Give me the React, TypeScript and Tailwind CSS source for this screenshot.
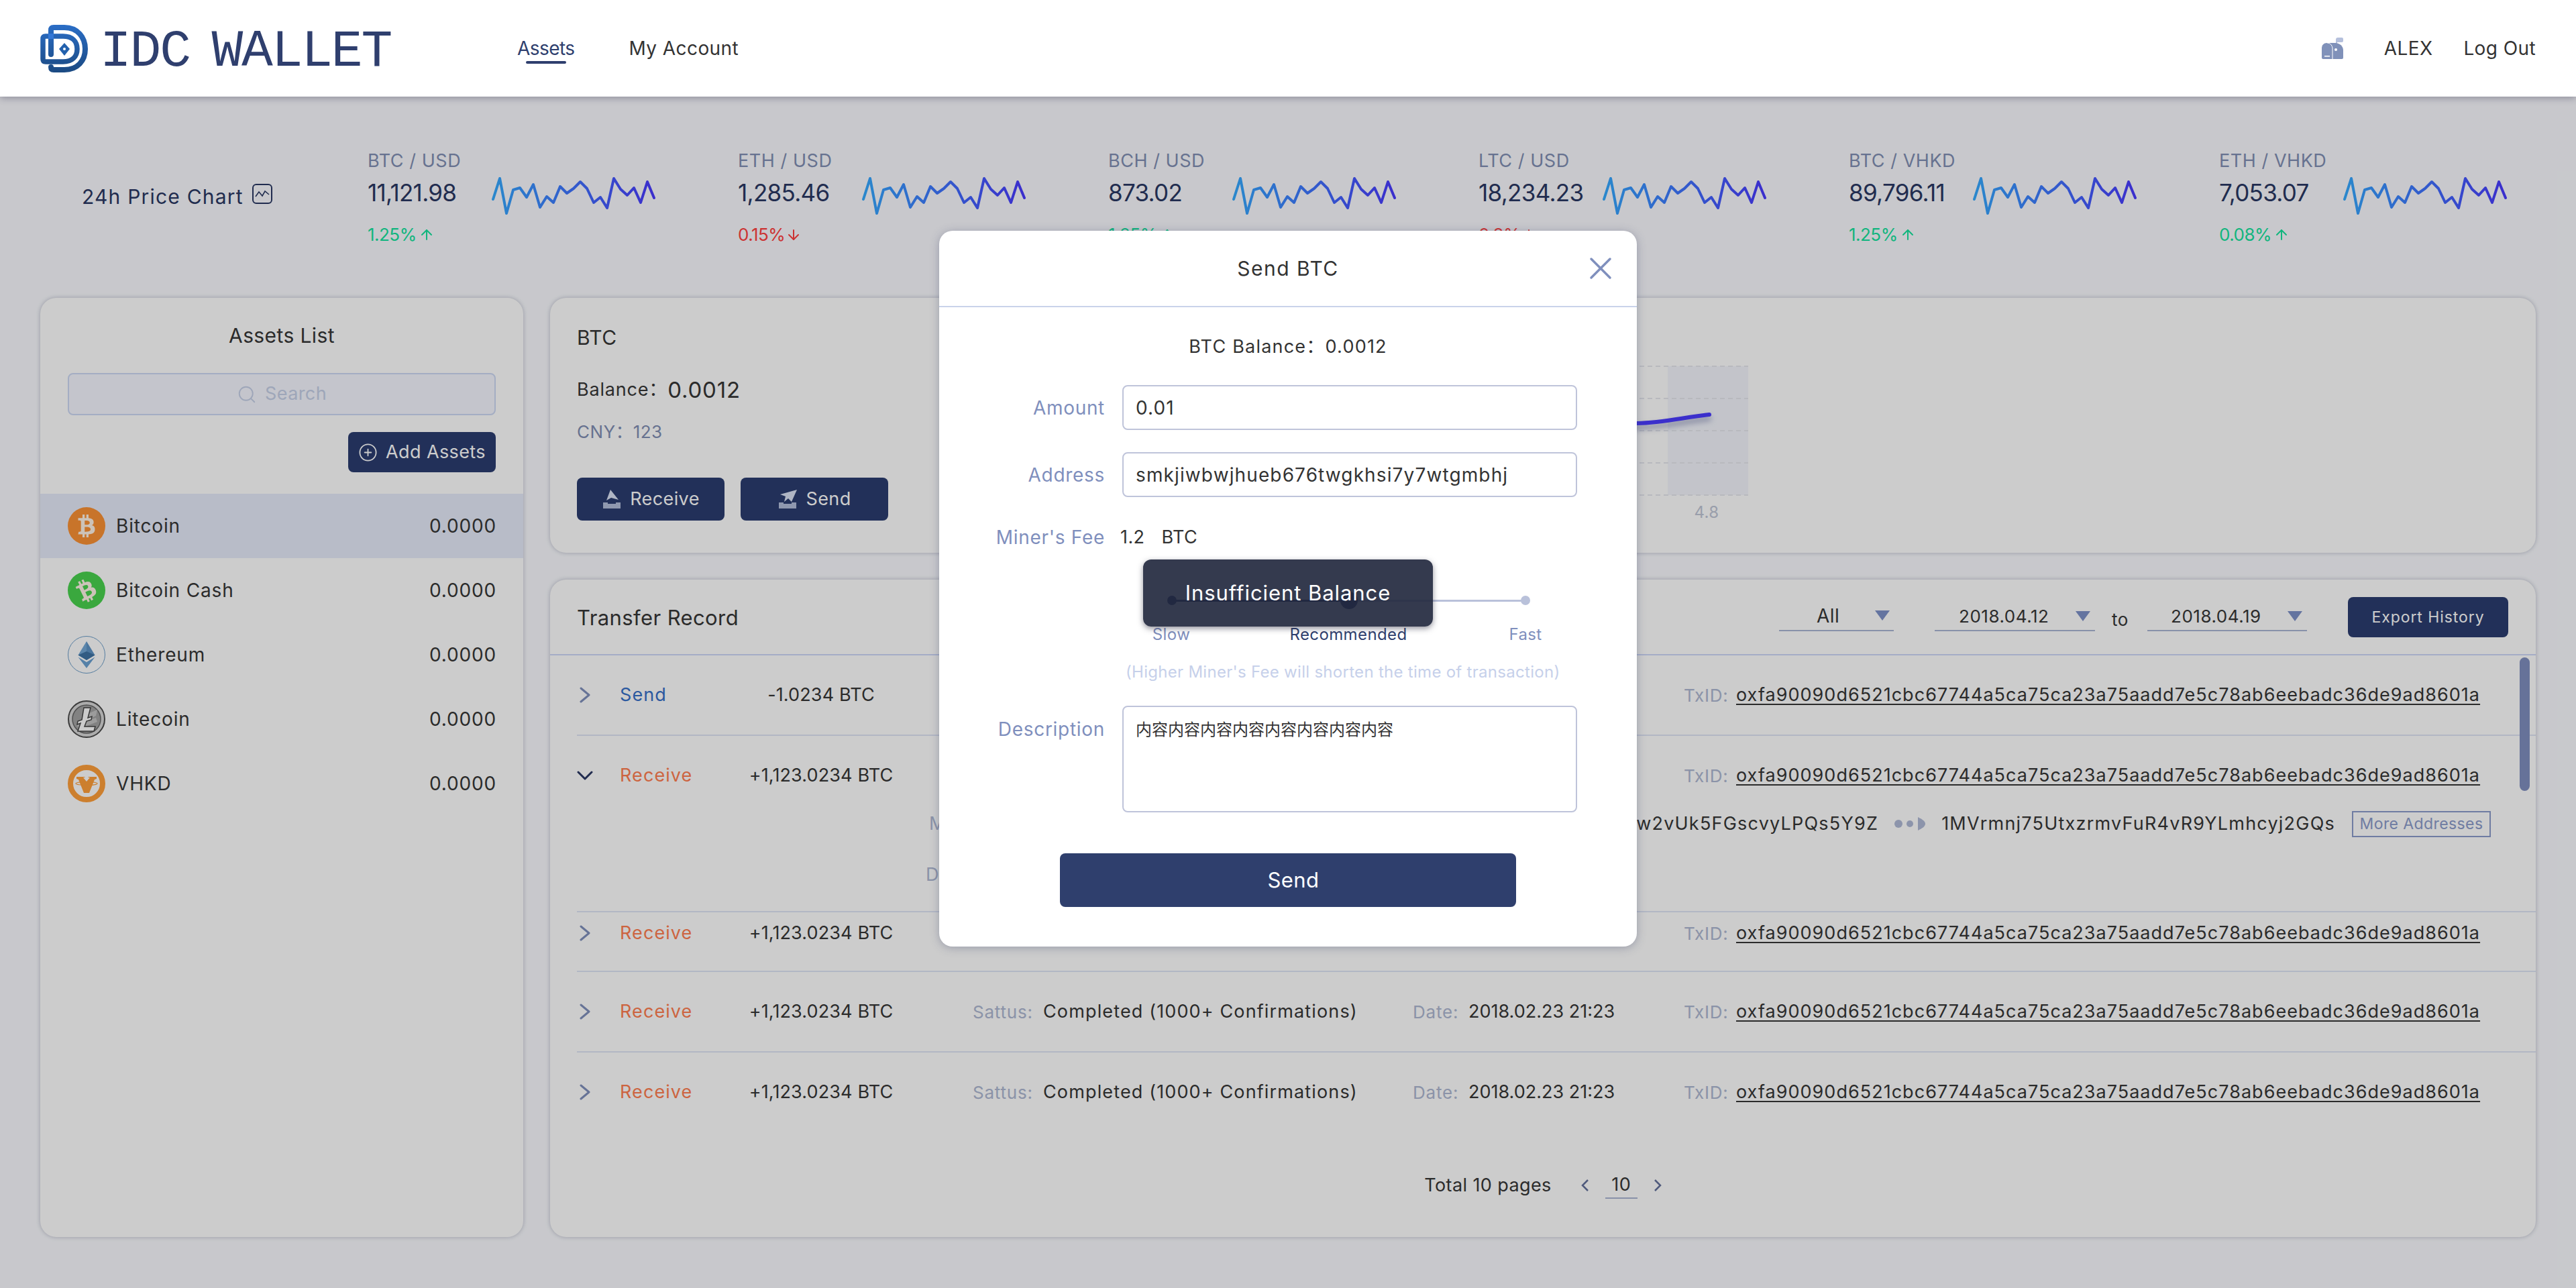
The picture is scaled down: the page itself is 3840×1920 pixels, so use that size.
import { ArrowDown, ArrowUp, CirclePlus, Search, X } from 'lucide-react';
import { FaBtc } from 'react-icons/fa';

/* ------------------------------------------Data------------------*/
const TICKERS = [
  { pair: 'BTC / USD', price: '11,121.98', pct: '1.25%', up: true },
  { pair: 'ETH / USD', price: '1,285.46', pct: '0.15%', up: false },
  { pair: 'BCH / USD', price: '873.02', pct: '1.25%', up: true },
  { pair: 'LTC / USD', price: '18,234.23', pct: '0.8%', up: false },
  { pair: 'BTC / VHKD', price: '89,796.11', pct: '1.25%', up: true },
  { pair: 'ETH / VHKD', price: '7,053.07', pct: '0.08%', up: true },
];

const SPARK_POINTS =
  '0,31 10,0 20,52 30,17 40,14 50,28 60,9 70,43 80,27 90,36 100,12 110,22 120,15 130,5 140,15 150,36 160,28 170,44 180,0 190,16 200,25 210,14 220,36 230,5 240,29';

const HASH = 'oxfa90090d6521cbc67744a5ca75ca23a75aadd7e5c78ab6eebadc36de9ad8601a';

/* ------------------------------------------Icons-----------------*/
function Logo() {
  return (
    <svg viewBox="60 36 71 71" className="w-[71px] h-[71px]" fill="none">
      <defs>
        <linearGradient id="logoFill" x1="0" y1="36" x2="0" y2="107" gradientUnits="userSpaceOnUse">
          <stop offset="0" stopColor="#2a6dc6" />
          <stop offset="1" stopColor="#1b4a82" />
        </linearGradient>
      </defs>
      <path d="M76 80V44q0-4 4-4h16c20 0 31 15 31 32s-11 31-31 31H80q-4 0-4-4" stroke="url(#logoFill)" strokeWidth="8" strokeLinecap="round" />
      <path d="M94 53H68q-4 0-4 4v30q0 4 4 4h26c14 0 21-8 21-19s-7-19-21-19z" stroke="url(#logoFill)" strokeWidth="7.5" />
      <rect x="72" y="49" width="8" height="8" fill="#3377d6" />
      <path d="M96 63l8 9-8 10-8-10z" fill="#2361ad" />
      <circle cx="96" cy="72" r="2" fill="#fff" />
    </svg>
  );
}

function Mailbox() {
  return (
    <svg viewBox="0 0 32 32" className="w-8 h-8">
      <path d="M21 17V3q0-3 3-3h6q2 0 2 2v3q0 2-2 2h-7v10z" fill="#b5c0dc" />
      <path d="M8 8h12c7 0 12 5 12 11v11q0 2-2 2H2q-2 0-2-2V16c0-5 3-8 8-8z" fill="#8091b9" />
      <path d="M8 8c5 0 8 4 8 9v15" stroke="#fff" strokeWidth="1" fill="none" />
      <circle cx="21" cy="18" r="2" fill="#fff" />
      <rect x="4" y="27" width="8" height="1.5" fill="#fff" />
    </svg>
  );
}

function ChartIcon() {
  return (
    <svg viewBox="0 0 30 30" className="w-[30px] h-[30px]" fill="none" stroke="#2a3863" strokeWidth="2">
      <rect x="1" y="1" width="28" height="28" rx="5" />
      <path d="M5 19l5-7 5 6 4-7 6 5" strokeWidth="1.6" />
    </svg>
  );
}

function TrayPlane({ receive }: { receive?: boolean }) {
  return (
    <svg viewBox="0 0 30 28" className="w-[30px] h-[28px]">
      {receive ? (
        <path d="M13 0l12 15-11-3-7 4z" fill="#dbe3f5" />
      ) : (
        <path d="M29 0L21 18l-5-5-6 5 2-8-8-3z" fill="#dbe3f5" />
      )}
      <path d="M2 19h7v2h12v-2h7v9H2z" fill="#b3bedb" />
    </svg>
  );
}

function Sparkline({ id }: { id: string }) {
  return (
    <svg width="246" height="60" viewBox="-3 -3 246 60" fill="none" className="shrink-0">
      <defs>
        <linearGradient id={id} x1="0" y1="0" x2="240" y2="0" gradientUnits="userSpaceOnUse">
          <stop offset="0" stopColor="#35aaff" />
          <stop offset="1" stopColor="#4a3aff" />
        </linearGradient>
      </defs>
      <polyline points={SPARK_POINTS} stroke={`url(#${id})`} strokeWidth="4" strokeLinejoin="round" strokeLinecap="round" />
    </svg>
  );
}

function CoinBadge({ color, tilt }: { color: string; tilt: string }) {
  return (
    <div className={`w-14 h-14 rounded-full flex items-center justify-center text-[#fff4e8] ${color}`}>
      <FaBtc className={`w-[30px] h-[34px] ${tilt}`} />
    </div>
  );
}

function EthIcon() {
  return (
    <svg viewBox="0 0 56 56" className="w-14 h-14">
      <circle cx="28" cy="28" r="27.5" fill="none" stroke="#6a9cc8" strokeWidth="1" />
      <path d="M28 8L15.5 28.5 28 36z" fill="#73a8d6" />
      <path d="M28 8l12.500 20.500L28 36z" fill="#5e94c6" />
      <path d="M15.500 28.500L28 23l12.500 5.500L28 36z" fill="#3f74a4" />
      <path d="M15.500 31.500L28 39l12.500-7.500L28 48z" fill="#6ba2d2" />
    </svg>
  );
}

function LtcIcon() {
  return (
    <svg viewBox="0 0 56 56" className="w-14 h-14">
      <circle cx="28" cy="28" r="27" fill="#d8d8d8" stroke="#4c4c4c" strokeWidth="2" />
      <circle cx="28" cy="28" r="21" fill="#a3a3a3" stroke="#666" strokeWidth="1.500" />
      <path d="M30 20l14-6-2 9-12 6zM12 36l30-10 2 6-26 10z" fill="#c4c4c4" />
      <path d="M24 11h10l-4 15 6-2-1 5-7 2-3 8h16l-2 7H15l4-12-5 2 1-5 6-2z" fill="#fff" stroke="#444" strokeWidth="1.500" />
    </svg>
  );
}

function VhkdIcon() {
  return (
    <svg viewBox="0 0 56 56" className="w-14 h-14">
      <circle cx="28" cy="28" r="24" fill="#fff" stroke="#ff9f3a" strokeWidth="8" />
      <path d="M13 18h12l3 4 3-4h12v3l-3 1-8 20h-8l-8-20-3-1z" fill="#ff9f3a" />
      <path d="M23 19h10l-5 6z" fill="#fff" />
      <ellipse cx="28" cy="28" rx="16" ry="2.500" fill="none" stroke="#ff9f3a" strokeWidth="1.200" />
    </svg>
  );
}

function Caret() {
  return (
    <svg viewBox="0 0 22 15" className="w-[22px] h-[15px]">
      <path d="M0 0h22L11 15z" fill="#7e91c8" />
    </svg>
  );
}

const COINS = [
  { name: 'Bitcoin', icon: <CoinBadge color="bg-[#fa9135]" tilt="rotate-[0deg]" /> },
  { name: 'Bitcoin Cash', icon: <CoinBadge color="bg-[#49d24e]" tilt="-rotate-[26deg]" /> },
  { name: 'Ethereum', icon: <EthIcon /> },
  { name: 'Litecoin', icon: <LtcIcon /> },
  { name: 'VHKD', icon: <VhkdIcon /> },
];

/* ------------------------------------------Parts-----------------*/
function Header() {
  return (
    <header className="relative z-30 h-36 bg-white shadow-[0_2px_10px_rgba(50,50,80,0.4)] flex items-center pl-[60px] pr-[60px]">
      <Logo />
      <div className="ml-[18px] mt-[9px] w-[436px] font-['Liberation_Mono',monospace] text-[78px] leading-none tracking-[-2.200px] [word-spacing:-12px] text-[#2f3f6e] whitespace-nowrap">
        IDC WALLET
      </div>
      <nav className="ml-[186px] flex gap-[81px] text-[28px]">
        <div className="relative -tracking-[0.02em] text-[#2f3f6e]">
          Assets
          <span className="absolute left-[13px] top-[40px] w-[60px] h-1 rounded-full bg-[#2f3f6e]" />
        </div>
        <div className="tracking-[0.015em] text-[#333]">My Account</div>
      </nav>
      <div className="ml-auto flex items-center text-[28px] text-[#333]">
        <Mailbox />
        <span className="ml-[61px]">ALEX</span>
        <span className="ml-[46px]">Log Out</span>
      </div>
    </header>
  );
}

function Ticker({ pair, price, pct, up, index }: (typeof TICKERS)[number] & { index: number }) {
  return (
    <div className="w-[552px] shrink-0 pt-[75px]">
      <div className="text-[27px] leading-[42px] tracking-[0.02em] text-[#818fb4]">{pair}</div>
      <div className="flex items-start h-[64px]">
        <div className="w-[187px] text-[35px] leading-[52px] -tracking-[0.02em] text-[#2a3863]">{price}</div>
        <div className="mt-[2px] -ml-[3px]">
          <Sparkline id={`spark${index}`} />
        </div>
      </div>
      <div className={`mt-[7px] flex items-center text-[26px] leading-9 -tracking-[0.02em] ${up ? 'text-[#16e39e]' : 'text-[#ff4040]'}`}>
        {pct}
        {up ? <ArrowUp className="w-6 h-6 ml-[3px]" /> : <ArrowDown className="w-6 h-6 ml-[1px]" />}
      </div>
    </div>
  );
}

function AssetsList() {
  return (
    <aside className="w-[720px] shrink-0 bg-white rounded-3xl shadow-[0_0_6px_rgba(115,120,145,0.45)] overflow-hidden">
      <h2 className="h-[112px] flex items-center justify-center text-[30px] font-normal text-[#363636]">Assets List</h2>
      <div className="mx-[41px] h-[63px] rounded-lg border-2 border-[#cdd9f4] bg-[#f5f7ff] flex items-center justify-center text-[27px] text-[#c6d0e8]">
        <Search className="w-[30px] h-[30px] mr-[12px]" strokeWidth={1.500} />
        Search
      </div>
      <div className="mt-[25px] mr-[41px] flex justify-end">
        <button className="w-[220px] h-[60px] rounded-lg bg-[#2b3d70] text-[#fff] text-[27px] flex items-center justify-center gap-[12px]">
          <CirclePlus className="w-[29px] h-[29px]" strokeWidth={1.500} />
          Add Assets
        </button>
      </div>
      <ul className="mt-[32px]">
        {COINS.map((coin, i) => (
          <li key={coin.name} className={`h-24 pl-[41px] pr-[40px] flex items-center text-[28px] tracking-[0.03em] text-[#363636] ${i === 0 ? 'bg-[#e6ebfa]' : ''}`}>
            {coin.icon}
            <span className="ml-4">{coin.name}</span>
            <span className="ml-auto">0.0000</span>
          </li>
        ))}
      </ul>
    </aside>
  );
}

function BalanceCard() {
  return (
    <section className="h-[380px] bg-white rounded-3xl shadow-[0_0_6px_rgba(115,120,145,0.45)] flex pl-10">
      <div className="w-[540px] shrink-0 pt-[39px]">
        <div className="text-[30px] leading-10 text-[#363636]">BTC</div>
        <div className="mt-[38px] leading-10 text-[#363636] text-[27px] flex items-center tracking-[0.03em]">
          Balance：<span className="text-[33px]">0.0012</span>
        </div>
        <div className="mt-[23px] leading-10 text-[26px] text-[#818fb4]">CNY：123</div>
        <div className="mt-[48px] flex gap-6">
          <button className="w-[220px] h-16 rounded-lg bg-[#2b3d70] text-[#fff] text-[27px] flex items-center justify-center gap-[12px]">
            <TrayPlane receive />
            Receive
          </button>
          <button className="w-[220px] h-16 rounded-lg bg-[#2b3d70] text-[#fff] text-[27px] flex items-center justify-center gap-[12px]">
            <TrayPlane />
            Send
          </button>
        </div>
      </div>
      <svg width="1230" height="260" viewBox="1400 530 1230 260" className="mt-[86px] shrink-0">
        <rect x="2486" y="546" width="120" height="192" fill="#f4f6fd" />
        {[546, 594, 642, 690, 738].map((y) => (
          <line key={y} x1="1400" x2="2606" y1={y} y2={y} stroke="#e6e8ee" strokeWidth="2" strokeDasharray="7 5" />
        ))}
        <path d="M1400 700C1800 680 2300 640 2440 631c40-1 70-9 108-13" fill="none" stroke="#4a3bff" strokeWidth="6" strokeLinecap="round" className="drop-shadow-[0_6px_4px_rgba(70,80,140,0.5)]" />
        <text x="2544" y="772" textAnchor="middle" fontSize="24" fill="#c0c6d6">4.8</text>
      </svg>
    </section>
  );
}

function Cols({ amount, kind, open }: { amount: string; kind: 'Send' | 'Receive'; open?: boolean }) {
  const dim = 'text-[26px] tracking-[0.03em] text-[#aeb8d2]';
  return (
    <div className="h-[118px] shrink-0 flex items-center text-[27px] tracking-normal text-[#363636] whitespace-nowrap">
      <div className="w-16 shrink-0">
        {open ? (
          <svg viewBox="0 0 24 14" className="w-6 h-3.5" fill="none" stroke="#2a3863" strokeWidth="3" strokeLinecap="round" strokeLinejoin="round">
            <path d="M2 2l10 10L22 2" />
          </svg>
        ) : (
          <svg viewBox="0 0 16 24" className="w-4 h-6 ml-1" fill="none" stroke="#8090bc" strokeWidth="3" strokeLinecap="round" strokeLinejoin="round">
            <path d="M2 2l12 10L2 22" />
          </svg>
        )}
      </div>
      <div className={`w-[150px] shrink-0 tracking-[0.04em] ${kind === 'Send' ? 'text-[#3670c8]' : 'text-[#ff7e50]'}`}>{kind}</div>
      <div className="w-[300px] shrink-0 text-center tracking-[0.005em]">{amount}</div>
      <div className="w-[76px] shrink-0" />
      <div className="w-[656px] shrink-0 flex items-center">
        <span className={`w-[105px] ${dim}`}>Sattus:</span>
        <span className="tracking-[0.042em]">Completed (1000+ Confirmations)</span>
      </div>
      <div className="w-[404px] shrink-0 flex items-center">
        <span className={`w-[83px] ${dim}`}>Date:</span>2018.02.23 21:23
      </div>
      <div className="flex items-center">
        <span className={`w-[78px] ${dim}`}>TxID:</span>
        <span className="underline underline-offset-4 tracking-[0.038em]">{HASH}</span>
      </div>
    </div>
  );
}

function TransferCard() {
  return (
    <section className="mt-10 h-[980px] bg-white rounded-3xl shadow-[0_0_6px_rgba(115,120,145,0.45)] overflow-hidden">
      <div className="h-[113px] pl-10 pr-[41px] border-b-2 border-[#cdd8f8] flex items-start">
        <h2 className="mt-[37px] text-[31px] leading-10 font-normal text-[#363636]">Transfer Record</h2>
        <div className="ml-auto flex items-start text-[26px] text-[#363636]">
          <div className="w-[171px] h-[77px] border-b-2 border-[#aab6d4] flex items-center pt-[32px] pl-[56px]">
            <span className="text-[28px]">All</span>
            <span className="ml-auto mr-[6px]"><Caret /></span>
          </div>
          <div className="ml-[61px] w-[239px] h-[77px] border-b-2 border-[#aab6d4] flex items-center pt-[34px] pl-[36px]">
            <span className="tracking-[0.02em]">2018.04.12</span>
            <span className="ml-auto mr-[7px]"><Caret /></span>
          </div>
          <div className="w-[78px] h-[77px] pt-[40px] pl-[25px] leading-10">to</div>
          <div className="w-[238px] h-[77px] border-b-2 border-[#aab6d4] flex items-center pt-[34px] pl-[35px]">
            <span className="tracking-[0.02em]">2018.04.19</span>
            <span className="ml-auto mr-[7px]"><Caret /></span>
          </div>
          <button className="ml-[61px] mt-[26px] w-[239px] h-[60px] rounded-lg bg-[#2b3d70] text-[#fff] text-[23px] tracking-[0.04em]">Export History</button>
        </div>
      </div>

      <div className="relative h-[708px] overflow-hidden pl-10 text-[27px]">
        <div className="absolute right-[9px] top-[3px] w-[15px] h-[199px] rounded-full bg-[#808fc0]" />
        <div className="border-b-2 border-[#dfe5f5]">
          <Cols kind="Send" amount="-1.0234 BTC" />
        </div>
        <div className="h-[263px] border-b-2 border-[#dfe5f5]">
          <Cols kind="Receive" amount="+1,123.0234 BTC" open />
          <div className="flex items-center justify-between pl-[525px] pr-[67px] -mt-[7px] h-10 text-[#363636] whitespace-nowrap">
            <span className="text-[#aeb8d2]">Miner's Fee</span>
            <div className="flex items-center">
              <span className="tracking-[0.045em]">1DFhGpVw2vUk5FGscvyLPQs5Y9Z</span>
              <svg viewBox="0 0 46 20" className="w-[46px] h-5 mx-[24px]" fill="#b0bad6">
                <circle cx="6" cy="10" r="6" />
                <circle cx="23" cy="10" r="5" />
                <path d="M35 0c6 3 11 6 11 10s-5 7-11 10z" />
              </svg>
              <span className="tracking-[0.045em]">1MVrmnj75UtxzrmvFuR4vR9YLmhcyj2GQs</span>
              <span className="ml-[25px] h-[39px] w-[207px] border-2 border-[#8b9ccb] text-[#8b9ccb] text-[23px] flex items-center justify-center">More Addresses</span>
            </div>
          </div>
          <div className="mt-[36px] pl-[520px] h-10 leading-10 text-[#aeb8d2]">Description</div>
        </div>
        <div className="h-[89px] border-b-2 border-[#dfe5f5] overflow-hidden">
          <div className="-mt-[28px]">
            <Cols kind="Receive" amount="+1,123.0234 BTC" />
          </div>
        </div>
        <div className="h-[120px] border-b-2 border-[#dfe5f5]">
          <Cols kind="Receive" amount="+1,123.0234 BTC" />
        </div>
        <div className="h-[118px] border-b-2 border-[#dfe5f5]">
          <Cols kind="Receive" amount="+1,123.0234 BTC" />
        </div>
      </div>

      <div className="pt-[62px] flex items-center justify-center text-[27px] leading-[38px] text-[#363636]">
        Total 10 pages
        <svg viewBox="0 0 12 20" className="ml-[44px] w-3 h-5" fill="none" stroke="#63719c" strokeWidth="2.500">
          <path d="M10 2L2 10l8 8" />
        </svg>
        <span className="mx-[24px] w-[48px] text-center border-b-2 border-[#aab6d4]">10</span>
        <svg viewBox="0 0 12 20" className="w-3 h-5" fill="none" stroke="#63719c" strokeWidth="2.500">
          <path d="M2 2l8 8-8 8" />
        </svg>
      </div>
    </section>
  );
}

function SendModal() {
  const label = 'w-[247px] shrink-0 text-right text-[28px] tracking-[0.025em] text-[#7f8fbd]';
  const field = 'w-[678px] h-[67px] ml-[26px] rounded-lg border-2 border-[#bfc4da] pl-[18px] outline-none text-[#333] text-[28px] tracking-[0.04em]';
  return (
    <div className="absolute inset-0 z-20 bg-black/20 flex justify-center items-start pt-[344px]">
      <div className="relative w-[1040px] h-[1067px] bg-white rounded-[20px] shadow-[0_2px_14px_rgba(60,70,110,0.35)] text-[27px] text-[#333]">
        <div className="h-[114px] border-b-2 border-[#c9d3ea] flex items-center justify-center text-[30px] tracking-[0.05em]">
          Send BTC
          <X className="absolute right-[26px] top-[28px] w-14 h-14 text-[#7f8fbd]" strokeWidth={1.500} />
        </div>
        <div className="mt-[41px] h-9 leading-9 text-center tracking-[0.045em]">BTC Balance：0.0012</div>

        <div className="mt-[39px] flex items-center">
          <span className={label}>Amount</span>
          <input readOnly value="0.01" className={field} />
        </div>
        <div className="mt-[33px] flex items-center">
          <span className={label}>Address</span>
          <input readOnly value="smkjiwbwjhueb676twgkhsi7y7wtgmbhj" className={field} />
        </div>
        <div className="mt-10 h-10 flex items-center">
          <span className={label}>Miner's Fee</span>
          <span className="ml-[23px]">1.2</span>
          <span className="ml-[25px]">BTC</span>
        </div>

        <div className="relative mt-[61px] ml-[347px] w-[527px] h-[26px]">
          <div className="absolute inset-x-0 top-[12px] h-[3px] bg-[#b9c1da]" />
          <div className="absolute left-0 top-[12px] w-[264px] h-[3px] bg-[#2f3f6e]" />
          <div className="absolute -left-[7px] top-[6px] w-3.5 h-3.5 rounded-full bg-[#2f3f6e]" />
          <div className="absolute left-[251px] top-0 w-[26px] h-[26px] rounded-full bg-[#2f3f6e]" />
          <div className="absolute -right-[7px] top-[6px] w-3.5 h-3.5 rounded-full bg-[#b9c1da]" />
        </div>
        <div className="mt-[23px] ml-[214px] w-[792px] grid grid-cols-3 text-center text-[24px] leading-[30px]">
          <span className="text-[#7f8fbd]">Slow</span>
          <span className="text-[#2f3f6e]">Recommended</span>
          <span className="text-[#7f8fbd]">Fast</span>
        </div>
        <div className="mt-[26px] ml-[278px] text-[24px] leading-[30px] tracking-[0.012em] text-[#c6d0ea] whitespace-nowrap">(Higher Miner's Fee will shorten the time of transaction)</div>

        <div className="mt-[35px] flex items-start">
          <span className={`${label} mt-[14px]`}>Description</span>
          <textarea
            readOnly
            value="内容内容内容内容内容内容内容内容"
            className="w-[678px] h-[159px] ml-[26px] rounded-lg border-2 border-[#bfc4da] pl-[18px] pt-[18px] outline-none resize-none text-[24px] leading-8 tracking-normal text-[#333]"
          />
        </div>
        <button className="block mt-[61px] ml-[180px] w-[680px] h-20 rounded-lg bg-[#2f3f6d] text-white text-[31px] pl-4">Send</button>

        <div className="absolute left-[304px] top-[490px] w-[432px] h-[100px] rounded-xl bg-[rgba(32,39,60,0.91)] shadow-[0_3px_8px_rgba(40,40,60,0.5)] flex items-center justify-center text-[31px] tracking-[0.03em] text-white">
          Insufficient Balance
        </div>
      </div>
    </div>
  );
}

/* ------------------------------------------Run-------------------*/
export default function App() {
  return (
    <div className="relative h-[1920px] overflow-hidden bg-[#fafbff] font-['Inter','Noto_Sans_CJK_SC',sans-serif] tracking-[0.025em]">
      <Header />
      <div className="h-[300px] flex">
        <div className="w-[548px] shrink-0 pl-[122px] pt-[130px] flex items-start gap-[13px] text-[30px] leading-[38px] tracking-[0.04em] text-[#2a3863]">
          24h Price Chart
          <ChartIcon />
        </div>
        {TICKERS.map((t, i) => (
          <Ticker key={t.pair + i} {...t} index={i} />
        ))}
      </div>
      <main className="flex gap-10 px-[60px]">
        <AssetsList />
        <div className="flex-1 min-w-0">
          <BalanceCard />
          <TransferCard />
        </div>
      </main>
      <SendModal />
    </div>
  );
}
